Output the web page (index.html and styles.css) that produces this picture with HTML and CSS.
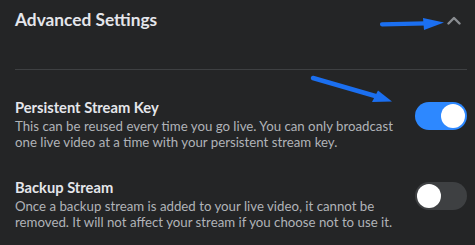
FILE: index.html
```html
<!DOCTYPE html>
<html>
<head>
<meta charset="utf-8">
<link rel="stylesheet" href="styles.css">
</head>
<body>
<div class="panel">
  <div class="header">
    <h2 class="heading">Advanced Settings</h2>
    <svg class="chevron" width="14" height="9" viewBox="0 0 14 9"><polyline points="1.5,7.5 7,2 12.5,7.5" fill="none" stroke="#8a8d91" stroke-width="2.4" stroke-linecap="round" stroke-linejoin="round"/></svg>
  </div>
  <div class="divider"></div>
  <div class="setting">
    <div class="text">
      <div class="title">Persistent Stream Key</div>
      <p class="desc">This can be reused every time you go live. You can only broadcast one live video at a time with your persistent stream key.</p>
    </div>
    <div class="toggle on"><span class="knob"></span></div>
  </div>
  <div class="setting">
    <div class="text">
      <div class="title">Backup Stream</div>
      <p class="desc">Once a backup stream is added to your live video, it cannot be removed. It will not affect your stream if you choose not to use it.</p>
    </div>
    <div class="toggle"><span class="knob"></span></div>
  </div>
  <svg class="annot" width="475" height="245" viewBox="0 0 475 245">
    <line x1="382" y1="24.3" x2="426" y2="23.3" stroke="#1b6ff0" stroke-width="4.2" stroke-linecap="round"/>
    <polygon points="423,18 444,22.6 424,30" fill="#1b6ff0"/>
    <line x1="313" y1="78" x2="377" y2="96.5" stroke="#1b6ff0" stroke-width="4.5" stroke-linecap="round"/>
    <polygon points="378,90.5 392,101.5 372,102" fill="#1b6ff0"/>
  </svg>
</div>
</body>
</html>
```
FILE: styles.css
```css
html, body {
  margin: 0;
  padding: 0;
  background: #242526;
}
.panel {
  position: relative;
  width: 475px;
  height: 245px;
  box-sizing: border-box;
  padding: 0 8px 0 15px;
  font-family: Lato, "Liberation Sans", sans-serif;
  overflow: hidden;
}
.header {
  display: flex;
  align-items: center;
  justify-content: space-between;
  padding-top: 10px;
}
.heading {
  margin: 0;
  font-size: 17.3px;
  line-height: 20px;
  font-weight: 700;
  color: #e4e6eb;
}
.chevron {
  margin-right: 6px;
}
.divider {
  height: 1px;
  background: #3e4042;
  margin-top: 39px;
}
.setting {
  display: flex;
  align-items: flex-start;
  justify-content: space-between;
  margin-top: 28px;
}
.text {
  width: 396px;
}
.title {
  font-size: 14.7px;
  line-height: 18px;
  font-weight: 700;
  color: #e4e6eb;
}
.desc {
  margin: 3px 0 0;
  font-size: 13.25px;
  line-height: 15.5px;
  color: #b0b3b8;
}
.toggle {
  margin-top: 4px;
  width: 52px;
  height: 28px;
  border-radius: 14px;
  background: #3e4042;
  box-sizing: border-box;
  padding: 2px;
  display: flex;
  justify-content: flex-start;
  flex-shrink: 0;
}
.toggle.on {
  background: #2d88ff;
  justify-content: flex-end;
}
.knob {
  width: 24px;
  height: 24px;
  border-radius: 50%;
  background: #fff;
}
.annot {
  position: absolute;
  left: 0;
  top: 0;
  pointer-events: none;
}
```
